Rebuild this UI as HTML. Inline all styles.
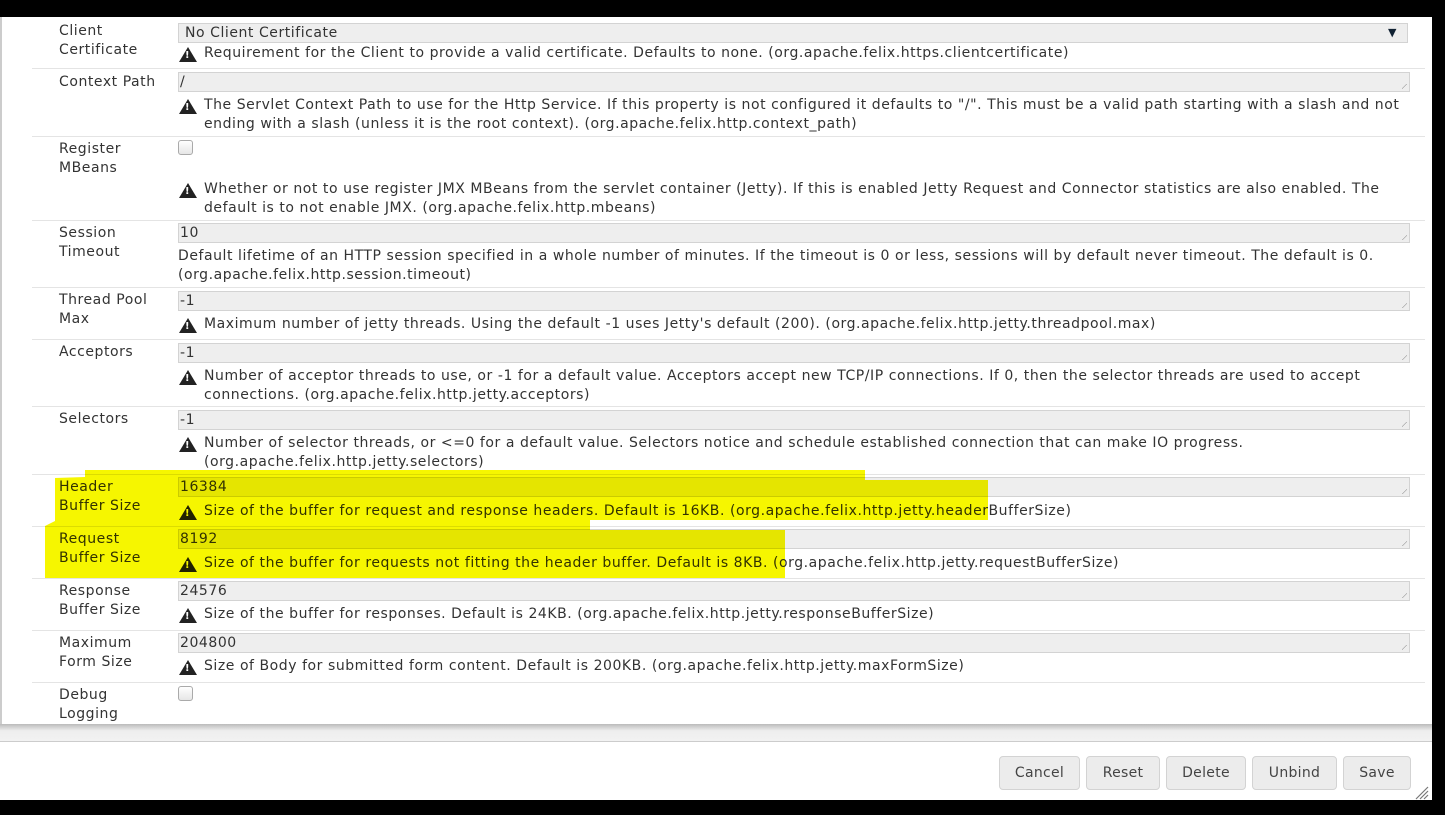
<!DOCTYPE html>
<html><head><meta charset="utf-8"><style>
*{margin:0;padding:0;box-sizing:border-box}
body{width:1445px;height:815px;overflow:hidden;background:#000;position:relative;font-family:"DejaVu Sans","Liberation Sans",sans-serif;font-size:14px;letter-spacing:0.55px;color:#333}
.dlg{position:absolute;left:0;top:17px;width:1432px;height:708px;background:#fff;border-left:2px solid #ccc}
.r{position:absolute;left:32px;width:1393px;border-top:1px solid #e4e4e4}
.lab{position:absolute;left:59px;line-height:19px}
.inp{position:absolute;left:178px;width:1232px;height:20px;background:#eee;border:1px solid #d3d3d3;line-height:18px;padding-left:1px}
.inp:after{content:"";position:absolute;right:2px;bottom:2px;width:5px;height:5px;background:linear-gradient(135deg,transparent 45%,#aaa 45%,#aaa 55%,transparent 55%)}
.sel:after{display:none}
.d{position:absolute;left:204px;width:1212px;line-height:19px}
.w{position:absolute;left:-25px;top:2px;width:0;height:0}
.w:before{content:"";position:absolute;left:0;top:1px;border-left:9px solid transparent;border-right:9px solid transparent;border-bottom:15px solid #222}
.w:after{content:"!";position:absolute;left:6px;top:3px;color:#fff;font-size:10px;font-weight:bold;line-height:13px}
.cb{position:absolute;left:178px;width:15px;height:15px;border:1px solid #aaa;border-radius:3px;background:linear-gradient(#fff,#e6e6e6)}
.btn{position:absolute;top:756px;height:34px;border:1px solid #d3d3d3;border-radius:4px;background:#ececec;line-height:32px;text-align:center;color:#444;font-size:14px;letter-spacing:0.3px}
</style></head><body>
<div class="dlg"></div>
<svg style="position:absolute;left:0;top:0" width="1445" height="815">
<polygon points="85,470 865,470 865,480 988,480 988,520 590,520 590,530 785,530 785,578 45,578 45,526 55,521 55,478 85,477" fill="#f6f600"/>
</svg>
<div style="position:absolute;left:0;top:0;width:1445px;height:815px;mix-blend-mode:multiply">
<div class="lab" style="top:22px">Client<br>Certificate</div>
<div class="inp sel" style="top:23px;width:1230px">&nbsp;No Client Certificate<span style="position:absolute;right:10px;font-size:11px;color:#123">▼</span></div>
<div class="d" style="top:44px"><span class="w"></span>Requirement for the Client to provide a valid certificate. Defaults to none. (org.apache.felix.https.clientcertificate)</div>

<div class="r" style="top:68px"></div>
<div class="lab" style="top:73px">Context Path</div>
<div class="inp" style="top:72px">/</div>
<div class="d" style="top:96px"><span class="w"></span>The Servlet Context Path to use for the Http Service. If this property is not configured it defaults to "/". This must be a valid path starting with a slash and not ending with a slash (unless it is the root context). (org.apache.felix.http.context_path)</div>

<div class="r" style="top:136px"></div>
<div class="lab" style="top:140px">Register<br>MBeans</div>
<div class="cb" style="top:140px"></div>
<div class="d" style="top:180px"><span class="w"></span>Whether or not to use register JMX MBeans from the servlet container (Jetty). If this is enabled Jetty Request and Connector statistics are also enabled. The default is to not enable JMX. (org.apache.felix.http.mbeans)</div>

<div class="r" style="top:220px"></div>
<div class="lab" style="top:224px">Session<br>Timeout</div>
<div class="inp" style="top:223px">10</div>
<div class="d" style="top:247px;left:178px;width:1238px">Default lifetime of an HTTP session specified in a whole number of minutes. If the timeout is 0 or less, sessions will by default never timeout. The default is 0. (org.apache.felix.http.session.timeout)</div>

<div class="r" style="top:287px"></div>
<div class="lab" style="top:291px">Thread Pool<br>Max</div>
<div class="inp" style="top:291px">-1</div>
<div class="d" style="top:315px"><span class="w"></span>Maximum number of jetty threads. Using the default -1 uses Jetty's default (200). (org.apache.felix.http.jetty.threadpool.max)</div>

<div class="r" style="top:339px"></div>
<div class="lab" style="top:343px">Acceptors</div>
<div class="inp" style="top:343px">-1</div>
<div class="d" style="top:367px"><span class="w"></span>Number of acceptor threads to use, or -1 for a default value. Acceptors accept new TCP/IP connections. If 0, then the selector threads are used to accept connections. (org.apache.felix.http.jetty.acceptors)</div>

<div class="r" style="top:406px"></div>
<div class="lab" style="top:410px">Selectors</div>
<div class="inp" style="top:410px">-1</div>
<div class="d" style="top:434px"><span class="w"></span>Number of selector threads, or &lt;=0 for a default value. Selectors notice and schedule established connection that can make IO progress. (org.apache.felix.http.jetty.selectors)</div>

<div class="r" style="top:474px"></div>
<div class="lab" style="top:478px">Header<br>Buffer Size</div>
<div class="inp" style="top:477px">16384</div>
<div class="d" style="top:502px"><span class="w"></span>Size of the buffer for request and response headers. Default is 16KB. (org.apache.felix.http.jetty.headerBufferSize)</div>

<div class="r" style="top:526px"></div>
<div class="lab" style="top:530px">Request<br>Buffer Size</div>
<div class="inp" style="top:529px">8192</div>
<div class="d" style="top:554px"><span class="w"></span>Size of the buffer for requests not fitting the header buffer. Default is 8KB. (org.apache.felix.http.jetty.requestBufferSize)</div>

<div class="r" style="top:578px"></div>
<div class="lab" style="top:582px">Response<br>Buffer Size</div>
<div class="inp" style="top:581px">24576</div>
<div class="d" style="top:605px"><span class="w"></span>Size of the buffer for responses. Default is 24KB. (org.apache.felix.http.jetty.responseBufferSize)</div>

<div class="r" style="top:630px"></div>
<div class="lab" style="top:634px">Maximum<br>Form Size</div>
<div class="inp" style="top:633px">204800</div>
<div class="d" style="top:657px"><span class="w"></span>Size of Body for submitted form content. Default is 200KB. (org.apache.felix.http.jetty.maxFormSize)</div>

<div class="r" style="top:682px"></div>
<div class="lab" style="top:686px">Debug<br>Logging</div>
<div class="cb" style="top:686px"></div>
</div>
<div style="position:absolute;left:0;top:724px;width:1432px;height:17px;background:linear-gradient(#bbb,#eee 40%,#f2f2f2)"></div>
<div style="position:absolute;left:0;top:741px;width:1432px;height:59px;background:#fff;border-top:1px solid #ccc"></div>
<div class="btn" style="left:999px;width:81px">Cancel</div>
<div class="btn" style="left:1086px;width:74px">Reset</div>
<div class="btn" style="left:1166px;width:80px">Delete</div>
<div class="btn" style="left:1252px;width:85px">Unbind</div>
<div class="btn" style="left:1343px;width:68px">Save</div>
<svg style="position:absolute;left:1414px;top:786px" width="16" height="14"><path d="M2 13L14 1M6 13L14 5M10 13L14 9" stroke="#777" stroke-width="1.2"/></svg>
</body></html>
